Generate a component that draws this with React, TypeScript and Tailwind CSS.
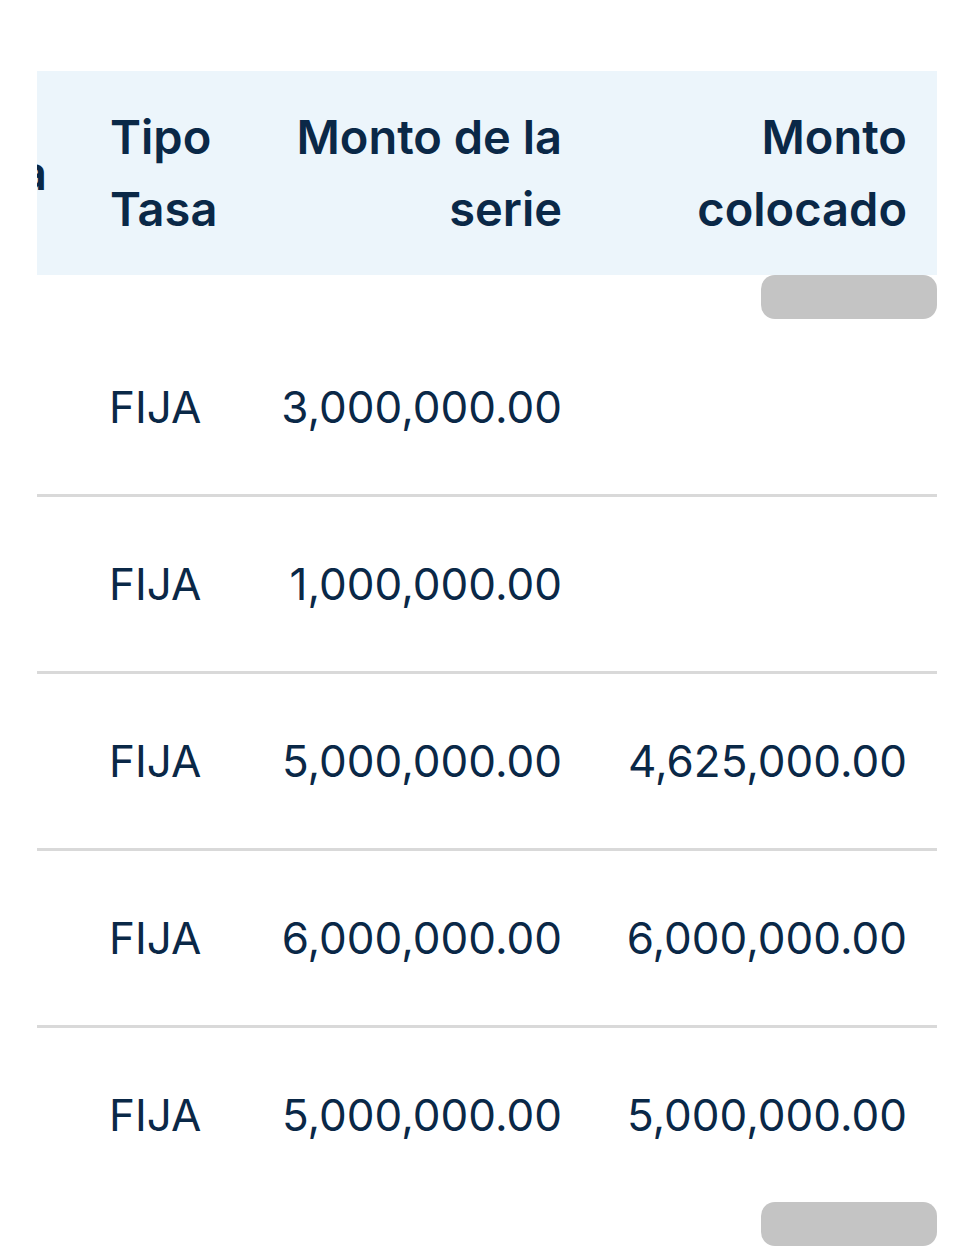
import React from "react";

const rows = [
  { tipo: "FIJA", serie: "3,000,000.00", colocado: "" },
  { tipo: "FIJA", serie: "1,000,000.00", colocado: "" },
  { tipo: "FIJA", serie: "5,000,000.00", colocado: "4,625,000.00" },
  { tipo: "FIJA", serie: "6,000,000.00", colocado: "6,000,000.00" },
  { tipo: "FIJA", serie: "5,000,000.00", colocado: "5,000,000.00" },
];

function Track() {
  return (
    <div className="flex h-[45px] w-[900px] justify-end">
      <div className="h-[44px] w-[176px] rounded-[14px] bg-[#c4c4c4]" />
    </div>
  );
}

export default function App() {
  return (
    <div
      className="h-[1246px] w-[973px] overflow-hidden bg-white pl-[37px] pt-[71px] text-[#0a2847]"
      style={{ fontFamily: "Inter, 'Liberation Sans', sans-serif" }}
    >
      <div className="w-[900px] overflow-hidden">
        <div className="ml-[-158px] flex w-[1058px] flex-col">
          {/* header */}
          <div className="flex h-[204px] items-center bg-[#ecf5fb] text-[47px] font-semibold leading-[72px]">
            <div className="flex w-[200px] shrink-0 justify-end pr-8 text-right">Moneda</div>
            <div className="w-[166px] shrink-0 pl-[31px] pr-4">Tipo Tasa</div>
            <div className="w-[347px] shrink-0 pl-8 pr-[30px] text-right">Monto de la serie</div>
            <div className="w-[345px] shrink-0 pl-8 pr-[30px] text-right">Monto colocado</div>
          </div>
        </div>
      </div>
      <Track />
      <div className="w-[900px] overflow-hidden">
        <div className="flex w-[900px] flex-col">
          {rows.map((r, i) => (
            <div
              key={i}
              className={
                "box-content flex h-[174px] items-center text-[44px] font-normal leading-[56px] " +
                (i < rows.length - 1 ? "border-b-[3px] border-[#d9d9d9]" : "")
              }
            >
              <div className="w-[208px] shrink-0 pl-[72px]">{r.tipo}</div>
              <div className="w-[347px] shrink-0 whitespace-nowrap pl-8 pr-[30px] text-right">{r.serie}</div>
              <div className="w-[345px] shrink-0 whitespace-nowrap pl-8 pr-[30px] text-right">{r.colocado}</div>
            </div>
          ))}
        </div>
      </div>
      <Track />
    </div>
  );
}
